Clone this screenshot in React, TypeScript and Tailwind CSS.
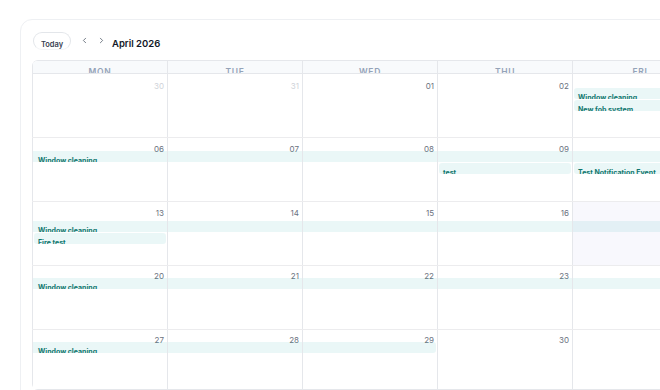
import React from 'react';
import { ChevronLeft, ChevronRight } from 'lucide-react';

type Seg = { t?: string; l?: boolean; r?: boolean } | null;

type Week = {
  days: number[];
  other: boolean[];
  numPt: string;
  numH: string;
  slots: Seg[][];
  last?: boolean;
};

const full = (t: string): Seg[] => [{ t }, {}, {}, {}, {}];

const weeks: Week[] = [
  {
    days: [30, 31, 1, 2, 3],
    other: [true, true, false, false, false],
    numPt: 'pt-[8px]',
    numH: 'h-[14px]',
    slots: [
      [null, null, null, null, { t: 'Window cleaning', l: true }],
      [null, null, null, null, { t: 'New fob system', l: true }],
    ],
  },
  {
    days: [6, 7, 8, 9, 10],
    other: [false, false, false, false, false],
    numPt: 'pt-[7px]',
    numH: 'h-[13px]',
    slots: [
      full('Window cleaning'),
      [null, null, null, { t: 'test', l: true, r: true }, { t: 'Test Notification Event', l: true }],
    ],
  },
  {
    days: [13, 14, 15, 16, 17],
    other: [false, false, false, false, false],
    numPt: 'pt-[7px]',
    numH: 'h-[19px]',
    slots: [full('Window cleaning'), [{ t: 'Fire test', l: true, r: true }, null, null, null, null]],
  },
  {
    days: [20, 21, 22, 23, 24],
    other: [false, false, false, false, false],
    numPt: 'pt-[6px]',
    numH: 'h-[12px]',
    slots: [full('Window cleaning')],
  },
  {
    days: [27, 28, 29, 30, 1],
    other: [false, false, false, false, true],
    numPt: 'pt-[6px]',
    numH: 'h-[12px]',
    slots: [[{ t: 'Window cleaning' }, {}, { r: true }, null, null]],
    last: true,
  },
];

const heads = ['MON', 'TUE', 'WED', 'THU', 'FRI'];

function pad(n: number) {
  return n < 10 ? '0' + n : String(n);
}

function Bar({ seg }: { seg: Seg }) {
  if (!seg) return <div className="h-[11px] shrink-0 mb-[1px]" />;
  return (
    <div
      className={
        'h-[11px] shrink-0 mb-[1px] overflow-hidden whitespace-nowrap bg-[#14aaaa17] text-[7px] leading-[9px] font-bold text-[#0f766e] pt-[5px] ' +
        (seg.l ? 'ml-[1px] rounded-l-[3px] pl-[4px] ' : 'pl-[5px] ') +
        (seg.r ? 'mr-[1px] rounded-r-[3px]' : '')
      }
    >
      {seg.t ?? ''}
    </div>
  );
}

export default function App() {
  return (
    <div className="w-[660px] h-[390px] overflow-hidden bg-white" style={{ fontFamily: 'Inter, "Liberation Sans", sans-serif' }}>
      <div className="ml-[20px] mt-[19px] w-[720px] h-[420px] rounded-[12px] border border-[#eef0f3] pl-[11px] pt-[12px]">
        <div className="flex items-center h-[18px] mb-[10px] ml-[1px]">
          <button className="w-[38px] h-[18px] rounded-full border border-[#e3e6ea] border-b-[#f3f4f6] text-[7.5px] font-semibold text-[#374151] pt-[6px] leading-[9px]">
            Today
          </button>
          <ChevronLeft className="ml-[9px] -mt-[2px] text-[#4b5563]" size={9} strokeWidth={2} />
          <ChevronRight className="ml-[8px] -mt-[2px] text-[#4b5563]" size={9} strokeWidth={2} />
          <div className="ml-[6px] mt-[6px] text-[9.5px] font-semibold text-[#111827]">April 2026</div>
        </div>
        <div className="w-[680px] border-t border-[#e5e7eb] rounded-tl-[6px] rounded-bl-[6px] overflow-hidden">
          <div className="grid grid-cols-[repeat(5,135px)] h-[13px] bg-[#f8fafc] border-b border-[#e5e7eb]">
            {heads.map((h) => (
              <div key={h} className="border-l border-[#e5e7eb] overflow-hidden text-center text-[8.5px] font-semibold tracking-[0.08em] text-[#94a3b8] pt-[6px] leading-[10px]">
                {h}
              </div>
            ))}
          </div>
          {weeks.map((w, wi) => (
            <div
              key={wi}
              className={
                'grid grid-cols-[repeat(5,135px)] ' +
                (w.last ? 'h-[60px] border-b border-[#e5e7eb]' : 'h-[64px] border-b border-[#ececee]')
              }
            >
              {w.days.map((d, di) => (
                <div
                  key={di}
                  className={
                    'border-l border-[#e5e7eb] flex flex-col overflow-hidden ' +
                    (wi === 2 && di === 4 ? 'bg-[#f8f8fd]' : '')
                  }
                >
                  <div
                    className={
                      'shrink-0 text-right pr-[3px] text-[8px] leading-[8px] ' +
                      w.numPt +
                      ' ' +
                      w.numH +
                      ' ' +
                      (w.other[di] ? 'text-[#cfd3d9]' : 'text-[#6b7280]')
                    }
                  >
                    {pad(d)}
                  </div>
                  {w.slots.map((s, si) => (
                    <Bar key={si} seg={s[di]} />
                  ))}
                </div>
              ))}
            </div>
          ))}
        </div>
      </div>
    </div>
  );
}
